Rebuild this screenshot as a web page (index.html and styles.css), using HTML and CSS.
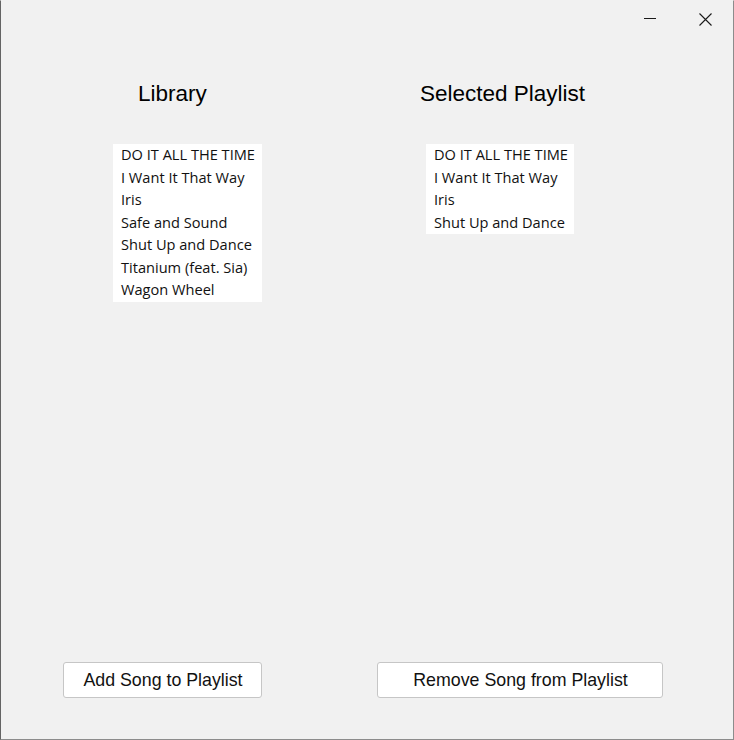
FILE: index.html
```html
<!DOCTYPE html>
<html>
<head>
<meta charset="utf-8">
<link rel="stylesheet" href="styles.css">
</head>
<body>
<div class="window">
  <div class="titlebar">
    <span class="ctl">
      <svg width="12" height="12" viewBox="0 0 12 12"><line x1="0" y1="5.5" x2="12" y2="5.5" stroke="#1a1a1a" stroke-width="1"/></svg>
    </span>
    <span class="ctl">
      <svg width="13" height="13" viewBox="0 0 13 13"><path d="M0.5 0.5 L12.5 12.5 M12.5 0.5 L0.5 12.5" stroke="#1a1a1a" stroke-width="1.1" fill="none"/></svg>
    </span>
  </div>
  <div class="panes">
    <div class="pane pane-left">
      <div class="title">Library</div>
      <ul class="list">
        <li>DO IT ALL THE TIME</li>
        <li>I Want It That Way</li>
        <li>Iris</li>
        <li>Safe and Sound</li>
        <li>Shut Up and Dance</li>
        <li>Titanium (feat. Sia)</li>
        <li>Wagon Wheel</li>
      </ul>
    </div>
    <div class="pane pane-right">
      <div class="title">Selected Playlist</div>
      <ul class="list">
        <li>DO IT ALL THE TIME</li>
        <li>I Want It That Way</li>
        <li>Iris</li>
        <li>Shut Up and Dance</li>
      </ul>
    </div>
  </div>
  <div class="actions">
    <button class="btn btn-add">Add Song to Playlist</button>
    <button class="btn btn-remove">Remove Song from Playlist</button>
  </div>
</div>
</body>
</html>
```
FILE: styles.css
```css
* { box-sizing: border-box; }
html, body { margin: 0; padding: 0; }
body { background: #f0f0f0; }

.window {
  width: 734px;
  height: 740px;
  background: #f1f1f1;
  border: 1px solid #8c8c8c;
  border-left-color: #646464;
  border-top-color: #f1f1f1;
  display: flex;
  flex-direction: column;
  font-family: "Liberation Sans", Arial, sans-serif;
  color: #000;
}

.titlebar {
  height: 36px;
  display: flex;
  justify-content: flex-end;
  gap: 9px;
  padding-right: 5px;
}
.ctl {
  width: 46px;
  height: 36px;
  display: flex;
  align-items: center;
  justify-content: center;
}
.ctl svg { display: block; }

.panes {
  flex: 1;
  display: grid;
  grid-template-columns: 366px 1fr;
  padding-top: 44px;
  align-items: start;
}
.pane { display: flex; flex-direction: column; align-items: flex-start; }

.title {
  font-size: 22.5px;
  line-height: 26px;
  height: 26px;
}
.list {
  list-style: none;
  margin: 37px 0 0 0;
  padding: 0 0 0 8px;
  background: #fff;
  font-family: "Open Sans", "Noto Sans", sans-serif;
  font-size: 14.6px;
  color: #111;
}
.list li {
  height: 22.5px;
  line-height: 21px;
  white-space: nowrap;
}

.pane-left .title { margin-left: 137px; }
.pane-left .list { margin-left: 112px; width: 149px; }
.pane-right .title { margin-left: 53px; }
.pane-right .list { margin-left: 59px; width: 148px; }

.actions {
  display: grid;
  grid-template-columns: 366px 1fr;
  padding-bottom: 41px;
}
.btn {
  height: 36px;
  background: #fff;
  border: 1px solid #c6c6c6;
  border-radius: 3px;
  font-family: "Liberation Sans", Arial, sans-serif;
  font-size: 17.8px;
  color: #111;
  padding: 0 0 0 1px;
}
.btn-add { margin-left: 62px; width: 199px; }
.btn-remove { margin-left: 10px; width: 286px; }
```
